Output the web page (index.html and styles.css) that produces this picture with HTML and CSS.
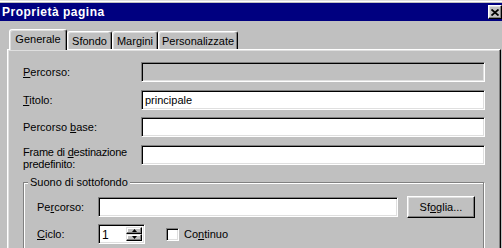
FILE: index.html
```html
<!DOCTYPE html>
<html lang="it">
<head>
  <meta charset="UTF-8">
  <title>Proprietà pagina</title>
  <link rel="stylesheet" href="styles.css">
</head>
<body>
  <div class="window">
    <div class="titlebar">
      <span class="title">Proprietà pagina</span>
      <button class="close">
        <svg width="8" height="7" viewBox="0 0 8 7"><path d="M0.5 0.5 L7.5 6.5 M7.5 0.5 L0.5 6.5" stroke="#000" stroke-width="1.8" fill="none"/></svg>
      </button>
    </div>

    <div class="tabs">
      <div class="tab active w-gen">Generale</div>
      <div class="tab w-sfo">Sfondo</div>
      <div class="tab w-mar">Margini</div>
      <div class="tab w-per">Personalizzate</div>
    </div>

    <div class="panel">
      <div class="form">
        <label class="label"><u>P</u>ercorso:</label>
        <div class="field disabled"></div>

        <label class="label"><u>T</u>itolo:</label>
        <div class="field">principale</div>

        <label class="label">Percorso <u>b</u>ase:</label>
        <div class="field"></div>

        <label class="label multi">Frame di <u>d</u>estinazione<br>predefinito:</label>
        <div class="field"></div>
      </div>

      <div class="group">
        <span class="group-title">Suono di sottofondo</span>
        <div class="group-row first">
          <label class="group-label">Pe<u>r</u>corso:</label>
          <div class="field grow"></div>
          <button class="btn">Sf<u>o</u>glia...</button>
        </div>
        <div class="group-row second">
          <label class="group-label"><u>C</u>iclo:</label>
          <div class="spin">
            <span class="spin-value">1</span>
            <span class="spin-buttons">
              <span class="spin-btn"><svg width="5" height="3" viewBox="0 0 5 3"><path d="M2.5 0 L5 3 L0 3 Z" fill="#000"/></svg></span>
              <span class="spin-btn"><svg width="5" height="3" viewBox="0 0 5 3"><path d="M0 0 L5 0 L2.5 3 Z" fill="#000"/></svg></span>
            </span>
          </div>
          <span class="check"></span>
          <label class="check-label">Co<u>n</u>tinuo</label>
        </div>
      </div>
    </div>
  </div>
</body>
</html>
```

FILE: styles.css
```css
body {
  margin: 0;
  background: #c0c0c0;
  font-family: "Liberation Sans", Arial, sans-serif;
  font-size: 11px;
  color: #000;
}
.window {
  width: 502px;
  height: 248px;
  box-sizing: border-box;
  overflow: hidden;
  border-top: 1px solid #dfdfdf;
  padding-top: 2px;
  box-shadow: inset 0 1px #fff;
}
.titlebar {
  height: 18px;
  background: #000080;
  display: flex;
  align-items: center;
  justify-content: space-between;
}
.title {
  color: #fff;
  font-weight: bold;
  font-size: 12px;
  letter-spacing: 0.5px;
  padding-left: 2px;
}
.close {
  width: 14px;
  height: 14px;
  box-sizing: border-box;
  padding: 0;
  background: #c0c0c0;
  border: 1px solid;
  border-color: #fff #000 #000 #fff;
  box-shadow: inset -1px -1px #808080, inset 1px 1px #dfdfdf;
  display: flex;
  align-items: center;
  justify-content: center;
}

/* linguette */
.tabs {
  display: flex;
  align-items: flex-end;
  height: 20px;
  margin-top: 8px;
  padding-left: 9px;
}
.tab {
  height: 18px;
  box-sizing: border-box;
  border: 1px solid;
  border-bottom: none;
  border-color: #fff #000 transparent #fff;
  border-radius: 3px 3px 0 0;
  box-shadow: inset -1px 0 #808080, inset 1px 1px #dfdfdf;
  display: flex;
  align-items: center;
  justify-content: center;
}
.tab.active {
  height: 21px;
  margin-bottom: -1px;
  padding-bottom: 2px;
  position: relative;
  z-index: 1;
  background: #c0c0c0;
}
.w-gen { width: 58px; }
.w-sfo { width: 45px; }
.w-mar { width: 46px; }
.w-per { width: 80px; }

.panel {
  margin-left: 7px;
  width: 494px;
  height: 220px;
  box-sizing: border-box;
  border: 1px solid;
  border-color: #fff #000 #000 #fff;
  box-shadow: inset -1px -1px #808080, inset 1px 1px #dfdfdf;
  padding: 12px 15px 20px 15px;
}

.form {
  display: grid;
  grid-template-columns: 118px 1fr;
  grid-template-rows: 21px 20px 21px auto;
  row-gap: 7px;
  align-items: start;
}
.label {
  line-height: 20px;
}
.label.multi {
  line-height: 12px;
  padding-top: 1px;
  letter-spacing: -0.2px;
}
.field {
  height: 20px;
  box-sizing: border-box;
  background: #fff;
  border: 1px solid;
  border-color: #808080 #fff #fff #808080;
  box-shadow: inset 1px 1px #000, inset -1px -1px #dfdfdf;
  padding: 0 3px;
  line-height: 18px;
}
.field.disabled {
  background: #c0c0c0;
}

/* gruppo suono */
.group {
  position: relative;
  margin-top: 12px;
  margin-right: 1px;
  border: 1px solid #808080;
  box-shadow: inset 1px 1px #fff, 1px 1px #fff;
  padding: 13px 8px 20px 13px;
}
.group-title {
  position: absolute;
  top: -7px;
  left: 4px;
  padding: 0 2px;
  line-height: 13px;
  background: #c0c0c0;
}
.group-row {
  display: flex;
  align-items: center;
}
.group-row.first {
  height: 22px;
}
.group-row.second {
  height: 20px;
  margin-top: 6px;
}
.group-label {
  width: 61px;
}
.field.grow {
  flex: 1;
}
.btn {
  width: 68px;
  height: 22px;
  margin-left: 9px;
  box-sizing: border-box;
  padding: 0;
  font: inherit;
  background: #c0c0c0;
  border: 1px solid;
  border-color: #fff #000 #000 #fff;
  box-shadow: inset -1px -1px #808080, inset 1px 1px #dfdfdf;
}

.spin {
  width: 47px;
  height: 20px;
  box-sizing: border-box;
  display: flex;
  background: #fff;
  border: 1px solid;
  border-color: #808080 #fff #fff #808080;
  box-shadow: inset 1px 1px #000, inset -1px -1px #dfdfdf;
  padding: 2px;
}
.spin-value {
  flex: 1;
  line-height: 16px;
  padding-left: 1px;
  font-size: 12px;
}
.spin-buttons {
  display: flex;
  flex-direction: column;
  width: 16px;
}
.spin-btn {
  height: 8px;
  box-sizing: border-box;
  background: #c0c0c0;
  border: 1px solid;
  border-color: #dfdfdf #000 #000 #dfdfdf;
  box-shadow: inset -1px -1px #808080, inset 1px 1px #fff;
  display: flex;
  align-items: center;
  justify-content: center;
}

.check {
  width: 13px;
  height: 13px;
  box-sizing: border-box;
  margin-left: 21px;
  background: #fff;
  border: 1px solid;
  border-color: #808080 #fff #fff #808080;
  box-shadow: inset 1px 1px #000, inset -1px -1px #dfdfdf;
}
.check-label {
  margin-left: 5px;
}
```
